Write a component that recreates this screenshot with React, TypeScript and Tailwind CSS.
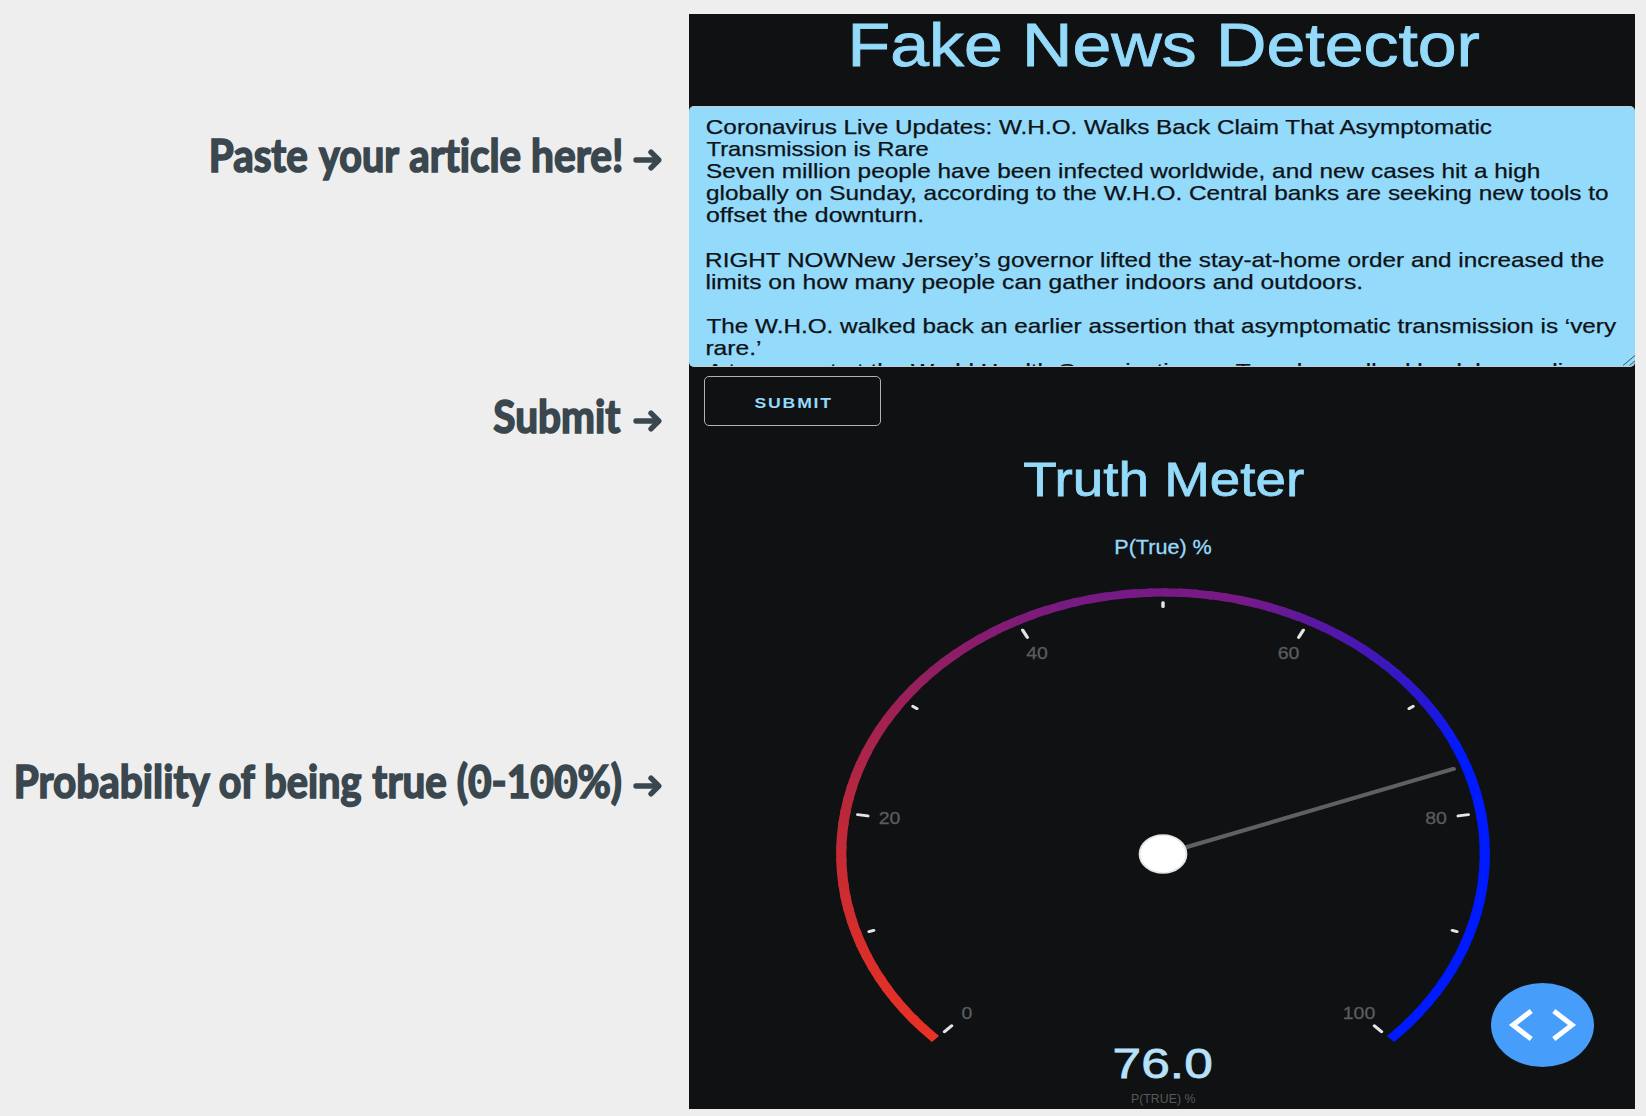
import { useLayoutEffect, useRef, useState } from "react";
import type { ReactNode } from "react";

/** One line of text whose glyphs are stretched horizontally to fill `w` pixels. */
function Fit({ text, w, className = "", children }: { text: string; w: number; className?: string; children?: ReactNode }) {
  const ref = useRef<HTMLSpanElement>(null);
  const [fit, setFit] = useState({ scale: 1, left: 0 });
  useLayoutEffect(() => {
    const cs = getComputedStyle(ref.current!);
    const ctx = document.createElement("canvas").getContext("2d")!;
    // Measured at ten times the size, so that the bounds are not rounded to whole pixels.
    ctx.font = `${cs.fontWeight} ${parseFloat(cs.fontSize) * 10}px ${cs.fontFamily}`;
    const spacing = (parseFloat(cs.letterSpacing) || 0) * (text.length - 1);
    const m = ctx.measureText(text);
    const ink = (m.actualBoundingBoxRight + m.actualBoundingBoxLeft) / 10 + spacing;
    setFit({ scale: w / ink, left: m.actualBoundingBoxLeft / 10 });
  }, [text, w]);
  return (
    <span className="block shrink-0" style={{ width: w }}>
      <span
        ref={ref}
        className={`block w-max origin-left whitespace-pre ${className}`}
        style={{ transform: `scaleX(${fit.scale}) translateX(${fit.left}px)` }}
      >
        {children ?? text}
      </span>
    </span>
  );
}

const labelFont =
  "font-['Lato',sans-serif] text-[45px] leading-[60px] font-bold text-[#3a474e] [-webkit-text-stroke:1.7px_#3a474e] [stroke-linejoin:round] [font-variant-ligatures:none]";

function DottedZero() {
  return (
    <span className="relative inline-block">
      0
      <span className="absolute top-[28.5px] left-1/2 h-[5px] w-[5px] -translate-x-1/2 rounded-full bg-[#3a474e]" />
    </span>
  );
}

function Callout({ words }: { words: { t: string; w: number; ml?: number; node?: ReactNode }[] }) {
  return (
    <div className="flex h-[60px] items-center justify-end pr-[27.5px]">
      {words.map((x) => (
        <div key={x.t} style={{ marginLeft: x.ml ?? 0 }}>
          <Fit text={x.t} w={x.w} className={labelFont}>
            {x.node}
          </Fit>
        </div>
      ))}
      <svg width="29" height="24" viewBox="0 0 29 24" className="mt-[10px] ml-[12px]" fill="none" stroke="#3a474e" strokeWidth="5.4" strokeLinecap="round" strokeLinejoin="round">
        <path d="M3 12H25" />
        <path d="M18 4.2L25.8 12L18 19.8" />
      </svg>
    </div>
  );
}

const article: [string, number][] = [
  ["Coronavirus Live Updates: W.H.O. Walks Back Claim That Asymptomatic", 787],
  ["Transmission is Rare", 221],
  ["Seven million people have been infected worldwide, and new cases hit a high", 832.5],
  ["globally on Sunday, according to the W.H.O. Central banks are seeking new tools to", 901.5],
  ["offset the downturn.", 215],
  ["", 0],
  ["RIGHT NOWNew Jersey’s governor lifted the stay-at-home order and increased the", 897.5],
  ["limits on how many people can gather indoors and outdoors.", 654.5],
  ["", 0],
  ["The W.H.O. walked back an earlier assertion that asymptomatic transmission is ‘very", 910],
  ["rare.’", 53],
  ["A top expert at the World Health Organization on Tuesday walked back her earlier", 880],
];

const STOPS: [number, number[]][] = [
  [0, [233, 50, 38]],
  [10, [214, 46, 44]],
  [20, [188, 40, 58]],
  [30, [154, 32, 88]],
  [38, [132, 28, 112]],
  [44, [118, 26, 132]],
  [55, [120, 26, 134]],
  [60, [92, 24, 158]],
  [70, [40, 24, 208]],
  [75, [0, 26, 255]],
  [100, [0, 26, 255]],
];

function colorAt(v: number) {
  for (let i = 1; i < STOPS.length; i++) {
    const [b, cb] = STOPS[i];
    const [a, ca] = STOPS[i - 1];
    if (v <= b) return `rgb(${ca.map((c, k) => Math.round(c + ((cb[k] - c) * (v - a)) / (b - a))).join(",")})`;
  }
  return "rgb(0,26,255)";
}

function polar(r: number, value: number): [number, number] {
  const a = ((225 - value * 2.7) * Math.PI) / 180;
  return [r * Math.cos(a), -r * Math.sin(a)];
}

function Spoke({ v, from, to, ...rest }: { v: number; from: number; to: number; stroke: string; strokeWidth: number }) {
  const [x1, y1] = polar(from, v);
  const [x2, y2] = polar(to, v);
  return <line x1={x1} y1={y1} x2={x2} y2={y2} strokeLinecap="round" {...rest} />;
}

const TICK_LABELS: [string, number, number][] = [
  ["0", 967, 1012.5],
  ["20", 889.5, 818],
  ["40", 1037, 653],
  ["60", 1288.5, 653],
  ["80", 1436, 818],
  ["100", 1359, 1012.5],
];

function Gauge() {
  return (
    <svg width="946" height="464" viewBox="689 580 946 464" className="block">
      <g transform="translate(1163 854) scale(1.23 1)">
        {Array.from({ length: 100 }, (_, i) => {
          const [x1, y1] = polar(261.6, i);
          const [x2, y2] = polar(261.6, Math.min(100, i + 1.3));
          return <path key={i} d={`M${x1} ${y1}A261.6 261.6 0 0 1 ${x2} ${y2}`} fill="none" stroke={colorAt(i + 0.5)} strokeWidth="8.3" />;
        })}
        {Array.from({ length: 11 }, (_, i) => (
          <Spoke key={i} v={i * 10} from={i % 2 ? 247.3 : 243} to={251.3} stroke="#e4e5e6" strokeWidth={2.8} />
        ))}
        <Spoke v={76} from={0} to={251} stroke="#5c6165" strokeWidth={4} />
        <circle r="19" fill="#fff" stroke="#e4e5e7" strokeWidth="1.6" />
      </g>
      {TICK_LABELS.map(([t, x, y]) => (
        <text
          key={t}
          transform={`translate(${x} ${y + 6}) scale(1.16 1)`}
          textAnchor="middle"
          fontSize="16.8"
          fill="#5a5d5f"
          stroke="#5a5d5f"
          strokeWidth="0.3"
          className="font-['Liberation_Sans',sans-serif]"
        >
          {t}
        </text>
      ))}
    </svg>
  );
}

export default function App() {
  return (
    <div className="flex h-[1116px] w-[1646px] overflow-hidden bg-[#eeeeee] font-['Liberation_Sans',Arial,sans-serif]">
      <aside className="flex w-[689px] shrink-0 flex-col pt-[124.5px]">
        <Callout
          words={[
            { t: "Paste", w: 95 },
            { t: "your", w: 80, ml: 12 },
            { t: "article", w: 111, ml: 11 },
            { t: "here!", w: 88, ml: 12 },
          ]}
        />
        <div className="h-[201px]" />
        <Callout words={[{ t: "Submit", w: 126.5 }]} />
        <div className="h-[305px]" />
        <Callout
          words={[
            { t: "Probability", w: 193 },
            { t: "of", w: 35, ml: 10 },
            { t: "being", w: 95, ml: 11.5 },
            { t: "true", w: 73, ml: 11.5 },
            {
              t: "(0-100%)",
              w: 163,
              ml: 12,
              node: (
                <>
                  (<DottedZero />-1<DottedZero />
                  <DottedZero />%)
                </>
              ),
            },
          ]}
        />
      </aside>

      <main className="relative mt-[14px] flex h-[1095px] w-[946px] flex-col overflow-hidden bg-[#101112] text-[#94dafb]">
        <header className="h-[92px] shrink-0 pl-[164px]">
          <Fit text="Fake News Detector" w={626.5} className="text-[61px] leading-[62px] [-webkit-text-stroke:0.9px_#94dafb]" />
        </header>

        <section className="relative h-[261px] shrink-0 overflow-hidden rounded-[5px] border-y border-[#c5cdd2] bg-[#94dafb] pt-[8.6px] pl-[17.8px] text-[#0d1216]">
          {article.map(([t, w], i) => (
            <div key={i} className="h-[22.2px]">
              {t && <Fit text={t} w={w} className="text-[20.3px] leading-[22.2px] [-webkit-text-stroke:0.25px_#0d1216]" />}
            </div>
          ))}
          <svg width="13" height="11" viewBox="0 0 13 11" className="absolute right-0 bottom-0" fill="none" stroke="#3c5564" strokeWidth="1">
            <path d="M1 10.5L13 0.5M7.5 10.5L13 6" />
          </svg>
        </section>

        <button className="mt-[9px] ml-[15px] h-[50px] w-[177px] shrink-0 rounded-[5px] border-[1.5px] border-[#b0b2b3] pt-[3px] pl-[49.5px] text-left">
          <Fit text="SUBMIT" w={76} className="text-[15.5px] leading-[20px] font-bold tracking-[1.6px]" />
        </button>

        <h2 className="mt-[22.5px] ml-[334.5px] h-[60px] shrink-0">
          <Fit text="Truth Meter" w={280} className="text-[48.5px] leading-[60px] [-webkit-text-stroke:0.8px_#94dafb]" />
        </h2>
        <p className="mt-[26px] ml-[426.5px] h-[22.5px] shrink-0">
          <Fit text="P(True) %" w={95} className="text-[20px] leading-[24px] [-webkit-text-stroke:0.3px_#94dafb]" />
        </p>
        <div className="mt-[23px] shrink-0">
          <Gauge />
        </div>
        <div className="-mt-px ml-[426px] h-[49px] shrink-0 text-[#b6e1fb]">
          <Fit text="76.0" w={96.5} className="text-[43px] leading-[40px] [-webkit-text-stroke:0.8px_#b6e1fb]" />
        </div>
        <div className="ml-[442.5px] shrink-0 text-[#56595b]">
          <Fit text="P(TRUE) %" w={63} className="text-[12.3px] leading-[14px]" />
        </div>

        <button className="absolute right-[41px] bottom-[42px] flex h-[84px] w-[103px] items-center justify-center rounded-[50%] bg-[#479dfa]">
          <svg width="70" height="36" viewBox="0 0 70 36" fill="none" stroke="#fff" strokeWidth="5">
            <path d="M23.2 4L5 18L23.2 32M45.8 4L64 18L45.8 32" />
          </svg>
        </button>
      </main>
    </div>
  );
}
